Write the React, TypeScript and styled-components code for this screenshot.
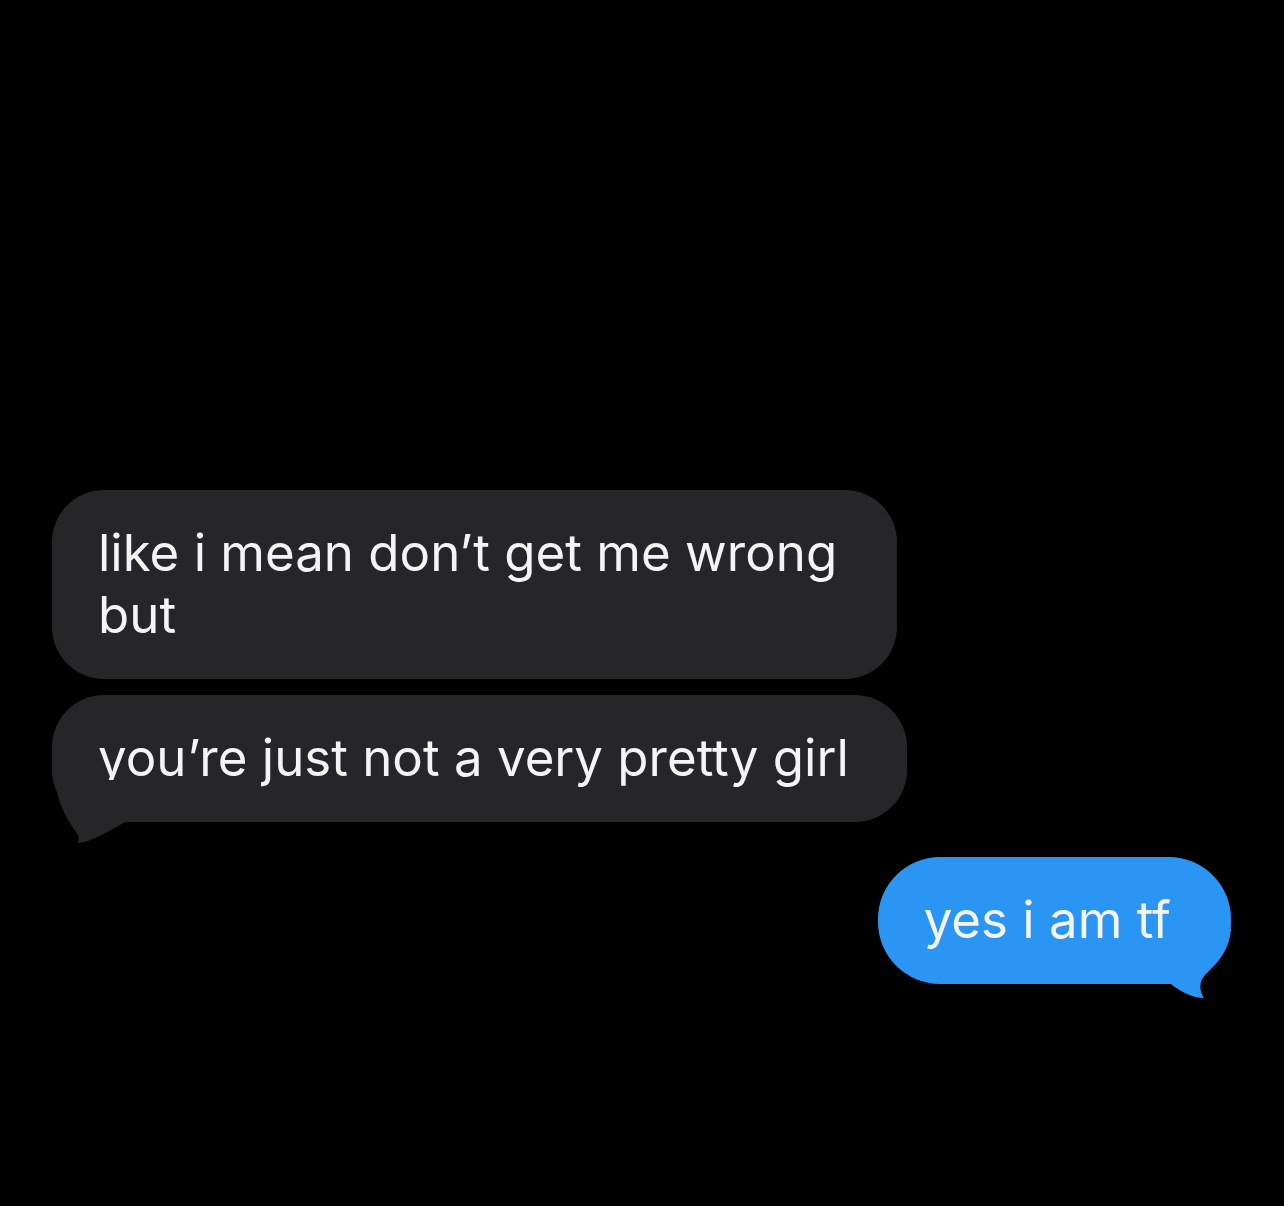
import React from 'react'
import styled, { createGlobalStyle } from 'styled-components'

type Message = {
    id: number
    from: 'them' | 'me'
    text: string
    tail?: boolean
    maxWidth?: number
}

const messages: Message[] = [
    { id: 1, from: 'them', text: 'like i mean don\u2019t get me wrong but', maxWidth: 845 },
    { id: 2, from: 'them', text: 'you\u2019re just not a very pretty girl', tail: true },
    { id: 3, from: 'me', text: 'yes i am tf', tail: true },
]

const GREY = '#262628'
const BLUE = '#2b95f3'

const GlobalStyle = createGlobalStyle`
    html, body {
        margin: 0;
        padding: 0;
        background: #000;
    }
    body {
        font-family: Inter, "Noto Sans", "Liberation Sans", sans-serif;
        -webkit-font-smoothing: antialiased;
    }
`

const Screen = styled.main`
    width: 1284px;
    height: 1206px;
    box-sizing: border-box;
    padding: 490px 53px 0 52px;
    background: #000;
    display: flex;
    flex-direction: column;
`

const Row = styled.div<{ $mine: boolean; $gap: number }>`
    display: flex;
    justify-content: ${({ $mine }) => ($mine ? 'flex-end' : 'flex-start')};
    margin-top: ${({ $gap }) => $gap}px;
`

const Bubble = styled.div<{ $mine: boolean; $max: number }>`
    position: relative;
    box-sizing: border-box;
    max-width: ${({ $max }) => $max}px;
    padding: 32px ${({ $mine }) => ($mine ? 60 : 58)}px 33px 46px;
    border-radius: ${({ $mine }) => ($mine ? 62 : 52)}px;
    background: ${({ $mine }) => ($mine ? BLUE : GREY)};
    color: #f4f4f6;
    font-size: 51px;
    line-height: 62px;
    letter-spacing: 0;
`

const TailSvg = styled.svg<{ $mine: boolean }>`
    position: absolute;
    ${({ $mine }) =>
        $mine
            ? `
        right: 0;
        bottom: -15px;
        width: 60px;
        height: 70px;
    `
            : `
        left: 0;
        bottom: -22px;
        width: 80px;
        height: 64px;
    `}
`

function Tail({ mine }: { mine: boolean }) {
    if (mine) {
        return (
            <TailSvg $mine viewBox="0 0 60 70" aria-hidden>
                <path d="M60 0 C58 24 44 36 34 46 C28 52 28 62 33 69 C22 69 10 63 0 55 L0 0 Z" fill={BLUE} />
            </TailSvg>
        )
    }
    return (
        <TailSvg $mine={false} viewBox="0 0 80 64" aria-hidden>
            <path d="M4 0 C4 20 14 38 24 52 C28 57 27 61 25 63 C40 62 55 52 75 41 L75 0 Z" fill={GREY} />
        </TailSvg>
    )
}

export default function App() {
    return (
        <>
            <GlobalStyle />
            <Screen>
                {messages.map((m, i) => {
                    const mine = m.from === 'me'
                    const prev = messages[i - 1]
                    const gap = i === 0 ? 0 : prev.from === m.from ? 16 : 35
                    return (
                        <Row key={m.id} $mine={mine} $gap={gap}>
                            <Bubble $mine={mine} $max={m.maxWidth ?? 900}>
                                {m.text}
                                {m.tail && <Tail mine={mine} />}
                            </Bubble>
                        </Row>
                    )
                })}
            </Screen>
        </>
    )
}
